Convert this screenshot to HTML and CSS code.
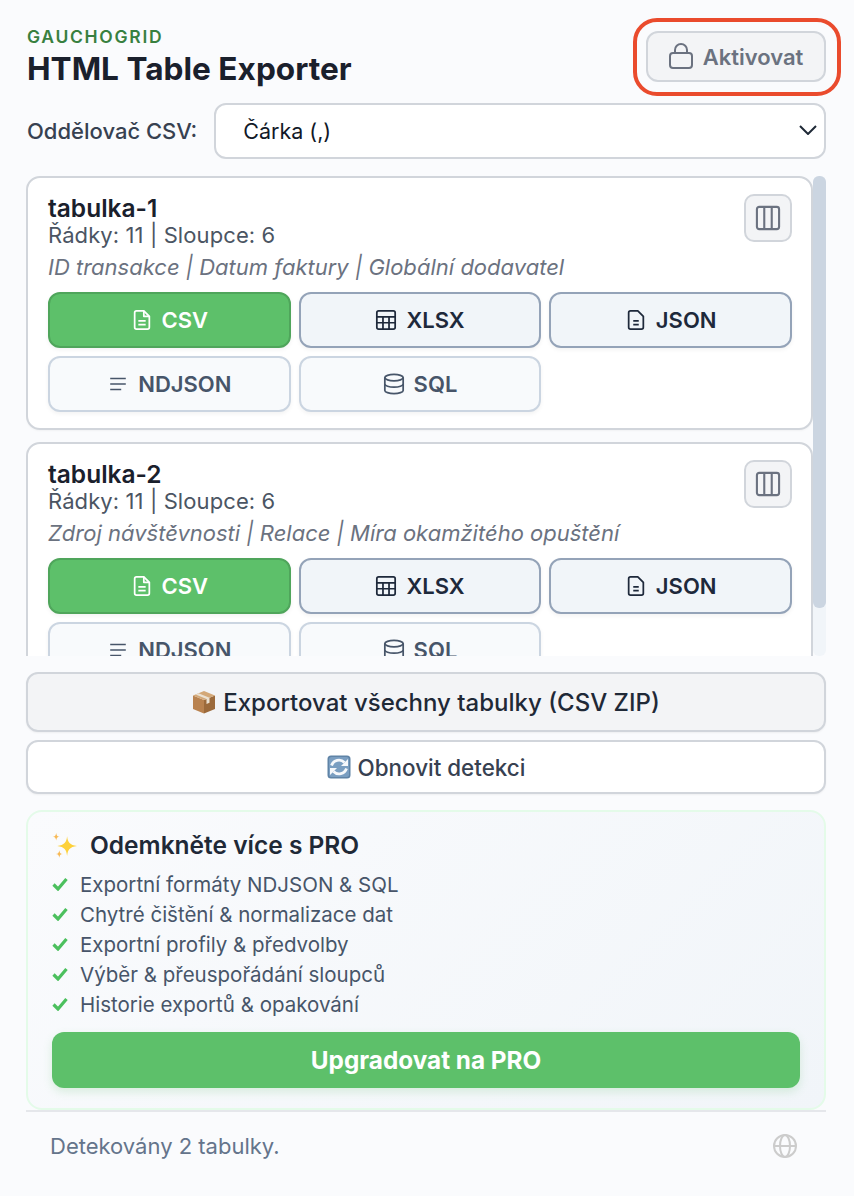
FILE: index.html
```html
<!DOCTYPE html>
<html lang="cs">
<head>
<meta charset="utf-8">
<title>HTML Table Exporter</title>
<link rel="stylesheet" href="styles.css">
</head>
<body>
<div class="app">
  <svg width="0" height="0" class="defs" aria-hidden="true">
    <defs>
      <symbol id="i-file" viewBox="0 0 24 24"><path d="M14 2H6a2 2 0 0 0-2 2v16a2 2 0 0 0 2 2h12a2 2 0 0 0 2-2V8z"/><path d="M14 2v6h6"/><path d="M8 13h8M8 17h8"/></symbol>
      <symbol id="i-table" viewBox="0 0 24 24"><rect x="2" y="2" width="20" height="20" rx="2"/><path d="M2 8.500h20M2 15h20M8.700 8.500V22M15.300 8.500V22"/></symbol>
      <symbol id="i-json" viewBox="0 0 24 24"><path d="M14 2H6a2 2 0 0 0-2 2v16a2 2 0 0 0 2 2h12a2 2 0 0 0 2-2V8z"/><path d="M9 13h6M9 17h6"/></symbol>
      <symbol id="i-lines" viewBox="0 0 24 24"><path d="M3.500 6h17M3.500 12h17M3.500 18h12"/></symbol>
      <symbol id="i-db" viewBox="0 0 24 24"><ellipse cx="12" cy="5" rx="10" ry="3.500"/><path d="M2 5v14c0 1.900 4.500 3.500 10 3.500s10-1.600 10-3.500V5"/><path d="M2 12c0 1.900 4.500 3.500 10 3.500s10-1.600 10-3.500"/></symbol>
      <symbol id="i-cols" viewBox="0 0 24 24"><rect x="2.500" y="2.500" width="19" height="19" rx="2"/><path d="M8.800 2.500v19M15.200 2.500v19"/></symbol>
    </defs>
  </svg>

  <header class="header">
    <div class="brand">
      <div class="brand-name">GAUCHOGRID</div>
      <h1 class="title">HTML Table Exporter</h1>
    </div>
    <button class="activate">
      <svg class="lock" viewBox="0 0 24 26"><rect x="1" y="10" width="22" height="15" rx="3"/><path d="M6 10V7a6 6 0 0 1 12 0v3"/></svg>
      <span>Aktivovat</span>
      <span class="callout"></span>
    </button>
  </header>

  <div class="separator">
    <span class="separator-label">Oddělovač CSV:</span>
    <div class="select">
      <span>Čárka (,)</span>
      <svg class="chevron" viewBox="0 0 18 10"><path d="M1 1l8 8 8-8"/></svg>
    </div>
  </div>

  <div class="tables-wrap">
    <div class="tables">
      <section class="card">
        <div class="card-head">
          <div>
            <div class="card-name">tabulka-1</div>
            <div class="card-meta">Řádky: 11 | Sloupce: 6</div>
          </div>
          <button class="cols"><svg class="ico-cols"><use href="#i-cols"/></svg></button>
        </div>
        <div class="card-cols">ID transakce | Datum faktury | Globální dodavatel</div>
        <div class="formats">
          <button class="fmt fmt-csv"><svg class="ico"><use href="#i-file"/></svg>CSV</button>
          <button class="fmt fmt-free"><svg class="ico"><use href="#i-table"/></svg>XLSX</button>
          <button class="fmt fmt-free"><svg class="ico"><use href="#i-json"/></svg>JSON</button>
          <button class="fmt fmt-pro"><svg class="ico"><use href="#i-lines"/></svg>NDJSON</button>
          <button class="fmt fmt-pro"><svg class="ico"><use href="#i-db"/></svg>SQL</button>
        </div>
      </section>
      <section class="card">
        <div class="card-head">
          <div>
            <div class="card-name">tabulka-2</div>
            <div class="card-meta">Řádky: 11 | Sloupce: 6</div>
          </div>
          <button class="cols"><svg class="ico-cols"><use href="#i-cols"/></svg></button>
        </div>
        <div class="card-cols">Zdroj návštěvnosti | Relace | Míra okamžitého opuštění</div>
        <div class="formats">
          <button class="fmt fmt-csv"><svg class="ico"><use href="#i-file"/></svg>CSV</button>
          <button class="fmt fmt-free"><svg class="ico"><use href="#i-table"/></svg>XLSX</button>
          <button class="fmt fmt-free"><svg class="ico"><use href="#i-json"/></svg>JSON</button>
          <button class="fmt fmt-pro"><svg class="ico"><use href="#i-lines"/></svg>NDJSON</button>
          <button class="fmt fmt-pro"><svg class="ico"><use href="#i-db"/></svg>SQL</button>
        </div>
      </section>
    </div>
    <div class="scrollbar"><div class="scrollbar-thumb"></div></div>
  </div>

  <button class="export-all">
    <svg class="emoji" viewBox="0 0 24 24">
      <path d="M1 5.500 12 10v13.500L1 19z" fill="#b9824f"/>
      <path d="M12 10 23 5.500V19l-11 4.500z" fill="#9c6a3b"/>
      <path d="M12 1 23 5.500 12 10 1 5.500z" fill="#d3a878"/>
      <path d="M6.500 3.300 17.500 7.800v5l-3 1.200V9L3.700 4.400z" fill="#ebe1d2"/>
    </svg>
    Exportovat všechny tabulky (CSV ZIP)
  </button>
  <button class="refresh">
    <svg class="emoji" viewBox="0 0 24 24">
      <rect x="0.500" y="0.500" width="23" height="23" rx="3.500" fill="#5f83a6"/>
      <rect x="2" y="2" width="20" height="20" rx="2.500" fill="#7a9ec1"/>
      <path d="M4.500 10.500a7.800 7.800 0 0 1 13-3M19.500 13.500a7.800 7.800 0 0 1-13 3" fill="none" stroke="#f6f8fb" stroke-width="2.800"/>
      <path d="M21 4v7h-7zM3 20v-7h7z" fill="#f6f8fb"/>
    </svg>
    Obnovit detekci
  </button>

  <aside class="promo">
    <div class="promo-title">
      <svg class="sparkle" viewBox="0 0 24 24">
        <path d="M14.500 3c.7 6 2.500 8.300 9.500 9.500-7 1-8.800 3.300-9.500 9.500-.7-6.200-2.500-8.500-9.500-9.500 7-1.200 8.800-3.500 9.500-9.500z" fill="#fdd13a"/>
        <path d="M4 0c.3 2.400 1 3.300 3.300 3.600-2.300.3-3 1.200-3.300 3.600C3.700 4.800 3 3.900.700 3.600 3 3.300 3.700 2.400 4 0z" fill="#f7b955"/>
        <path d="M7 16.500c.3 2.400 1 3.300 3.300 3.600-2.300.3-3 1.200-3.300 3.600-.3-2.400-1-3.300-3.300-3.600 2.300-.3 3-1.200 3.300-3.600z" fill="#f7b955"/>
      </svg>
      <span>Odemkněte více s PRO</span>
    </div>
    <ul class="promo-list">
      <li><svg class="check" viewBox="0 0 16 14"><path d="M1.500 7.500l4.500 4.500L14.500 2"/></svg>Exportní formáty NDJSON &amp; SQL</li>
      <li><svg class="check" viewBox="0 0 16 14"><path d="M1.500 7.500l4.500 4.500L14.500 2"/></svg>Chytré čištění &amp; normalizace dat</li>
      <li><svg class="check" viewBox="0 0 16 14"><path d="M1.500 7.500l4.500 4.500L14.500 2"/></svg>Exportní profily &amp; předvolby</li>
      <li><svg class="check" viewBox="0 0 16 14"><path d="M1.500 7.500l4.500 4.500L14.500 2"/></svg>Výběr &amp; přeuspořádání sloupců</li>
      <li><svg class="check" viewBox="0 0 16 14"><path d="M1.500 7.500l4.500 4.500L14.500 2"/></svg>Historie exportů &amp; opakování</li>
    </ul>
    <button class="upgrade">Upgradovat na PRO</button>
  </aside>

  <footer class="footer">
    <span>Detekovány 2 tabulky.</span>
    <svg class="globe" viewBox="0 0 24 24"><circle cx="12" cy="12" r="11"/><path d="M1 12h22"/><ellipse cx="12" cy="12" rx="5" ry="11"/></svg>
  </footer>
</div>
</body>
</html>
```

FILE: styles.css
```css
* { box-sizing: border-box; }
html, body { margin: 0; padding: 0; height: 100%; overflow: hidden; }
body { background: #fafbfd; font-family: Inter, "Noto Sans", sans-serif; color: #1f2937; }
button { font-family: inherit; cursor: pointer; margin: 0; }
.defs { position: absolute; }
.app { width: 854px; height: 1196px; padding: 26px 28px 0 26px; display: flex; flex-direction: column; }

.header { display: flex; justify-content: space-between; align-items: flex-start; height: 77px; flex: none; }
.brand { padding-left: 1px; }
.brand-name { font-size: 17.500px; line-height: 22px; font-weight: 600; letter-spacing: 1.700px; color: #38803f; }
.title { margin: 0; font-size: 31.600px; line-height: 42px; font-weight: 700; color: #1a202c; }
.activate { position: relative; margin-top: 5px; width: 180px; height: 51px; display: flex; align-items: center; justify-content: center; gap: 10px; background: #f3f4f6; border: 2px solid #d1d5db; border-radius: 12px; color: #6b7280; font-size: 22px; font-weight: 600; padding: 1px 0 0; }
.lock { width: 24px; height: 26px; margin-top: -2px; fill: none; stroke: #6b7280; stroke-width: 2; }
.callout { position: absolute; left: -15px; top: -15px; width: 208px; height: 78px; border: 4px solid #ea4b2d; border-radius: 24px; }

.separator { display: flex; align-items: center; gap: 17px; height: 56px; margin-bottom: 17px; flex: none; }
.separator-label { padding-left: 1px; font-size: 22px; font-weight: 500; color: #374151; white-space: nowrap; }
.select { flex: 1; height: 56px; display: flex; justify-content: space-between; align-items: center; padding: 0 7px 0 27px; background: #fff; border: 2px solid #d1d5db; border-radius: 12px; font-size: 21.500px; color: #111827; }
.chevron { width: 18px; height: 10px; margin-top: -2px; fill: none; stroke: #1f2937; stroke-width: 2; }

.tables-wrap { display: flex; height: 480px; flex: none; margin-bottom: 16px; }
.tables { flex: 1; min-width: 0; overflow: hidden; }
.scrollbar { width: 13px; flex: none; background: #f1f5f9; border-radius: 6px; }
.scrollbar-thumb { height: 432px; background: #cbd5e1; border-radius: 6px; }
.card { background: #fff; border: 2px solid #d1d5db; border-radius: 14px; padding: 16px 19px 16px 20px; height: 254px; margin-bottom: 12px; box-shadow: 0 1px 2px rgba(0,0,0,.04); }
.card-head { display: flex; justify-content: space-between; align-items: flex-start; height: 58px; }
.card-name { font-size: 24.500px; line-height: 28px; font-weight: 600; color: #1a202c; }
.card-meta { font-size: 22px; line-height: 26px; letter-spacing: .1px; color: #4b5563; }
.cols { width: 48px; height: 48px; padding: 0; display: flex; align-items: center; justify-content: center; background: #f3f4f6; border: 2px solid #d1d5db; border-radius: 10px; }
.ico-cols { width: 28px; height: 28px; fill: none; stroke: #6b7280; stroke-width: 1.800; }
.card-cols { font-size: 22px; line-height: 26px; font-style: italic; color: #6b7280; margin-top: 2px; white-space: nowrap; }
.formats { display: grid; grid-template-columns: repeat(3, 1fr); gap: 8px; margin-top: 12px; }
.fmt { height: 56px; display: flex; align-items: center; justify-content: center; gap: 9px; border-radius: 12px; font-size: 22px; font-weight: 600; padding: 0; border: 2px solid; box-shadow: 0 2px 4px rgba(0,0,0,.05); }
.ico { width: 22px; height: 22px; fill: none; stroke: currentColor; stroke-width: 1.900; stroke-linejoin: round; }
.fmt-csv { background: #5dc06a; border-color: #4fa55b; color: #fff; }
.fmt-free { background: #f1f5f9; border-color: #94a3b8; color: #1e293b; }
.fmt-pro { background: #f8fafc; border-color: #cbd5e1; color: #475569; }

.export-all { flex: none; height: 60px; margin-bottom: 8px; display: flex; align-items: center; justify-content: center; gap: 7px; background: #f3f4f6; border: 2px solid #d1d5db; border-radius: 12px; font-size: 24px; font-weight: 500; color: #1f2937; padding: 0; box-shadow: 0 1px 2px rgba(0,0,0,.05); }
.refresh { flex: none; height: 54px; margin-bottom: 16px; display: flex; align-items: center; justify-content: center; gap: 7px; background: #fff; border: 2px solid #d1d5db; border-radius: 12px; font-size: 22.400px; font-weight: 500; color: #374151; padding: 0; box-shadow: 0 1px 2px rgba(0,0,0,.05); }
.emoji { width: 24px; height: 24px; flex: none; }

.promo { flex: none; height: 300px; padding: 17px 24px 0 24px; background: linear-gradient(135deg, #fafbfd, #f1f5f9); border: 2px solid #e4fbe9; border-radius: 16px; }
.promo-title { display: flex; align-items: center; gap: 13px; height: 32px; font-size: 24.500px; font-weight: 600; color: #1f2937; }
.sparkle { width: 25px; height: 25px; }
.promo-list { list-style: none; margin: 8px 0 0; padding: 0; }
.promo-list li { display: flex; align-items: center; height: 30px; gap: 12px; font-size: 20.500px; color: #475569; white-space: nowrap; }
.check { width: 16px; height: 14px; flex: none; fill: none; stroke: #4cc05e; stroke-width: 3.200; }
.upgrade { display: block; width: 100%; height: 56px; margin-top: 13px; background: #5dc06a; border: 0; border-radius: 12px; color: #fff; font-size: 24.300px; font-weight: 700; box-shadow: 0 4px 10px rgba(93,192,106,.2); }

.footer { flex: none; height: 70px; border-top: 2px solid #e5e7eb; display: flex; justify-content: space-between; align-items: center; padding: 0 29px 0 24px; font-size: 22px; color: #64748b; }
.globe { width: 24px; height: 24px; fill: none; stroke: #cccccc; stroke-width: 2; }
```
